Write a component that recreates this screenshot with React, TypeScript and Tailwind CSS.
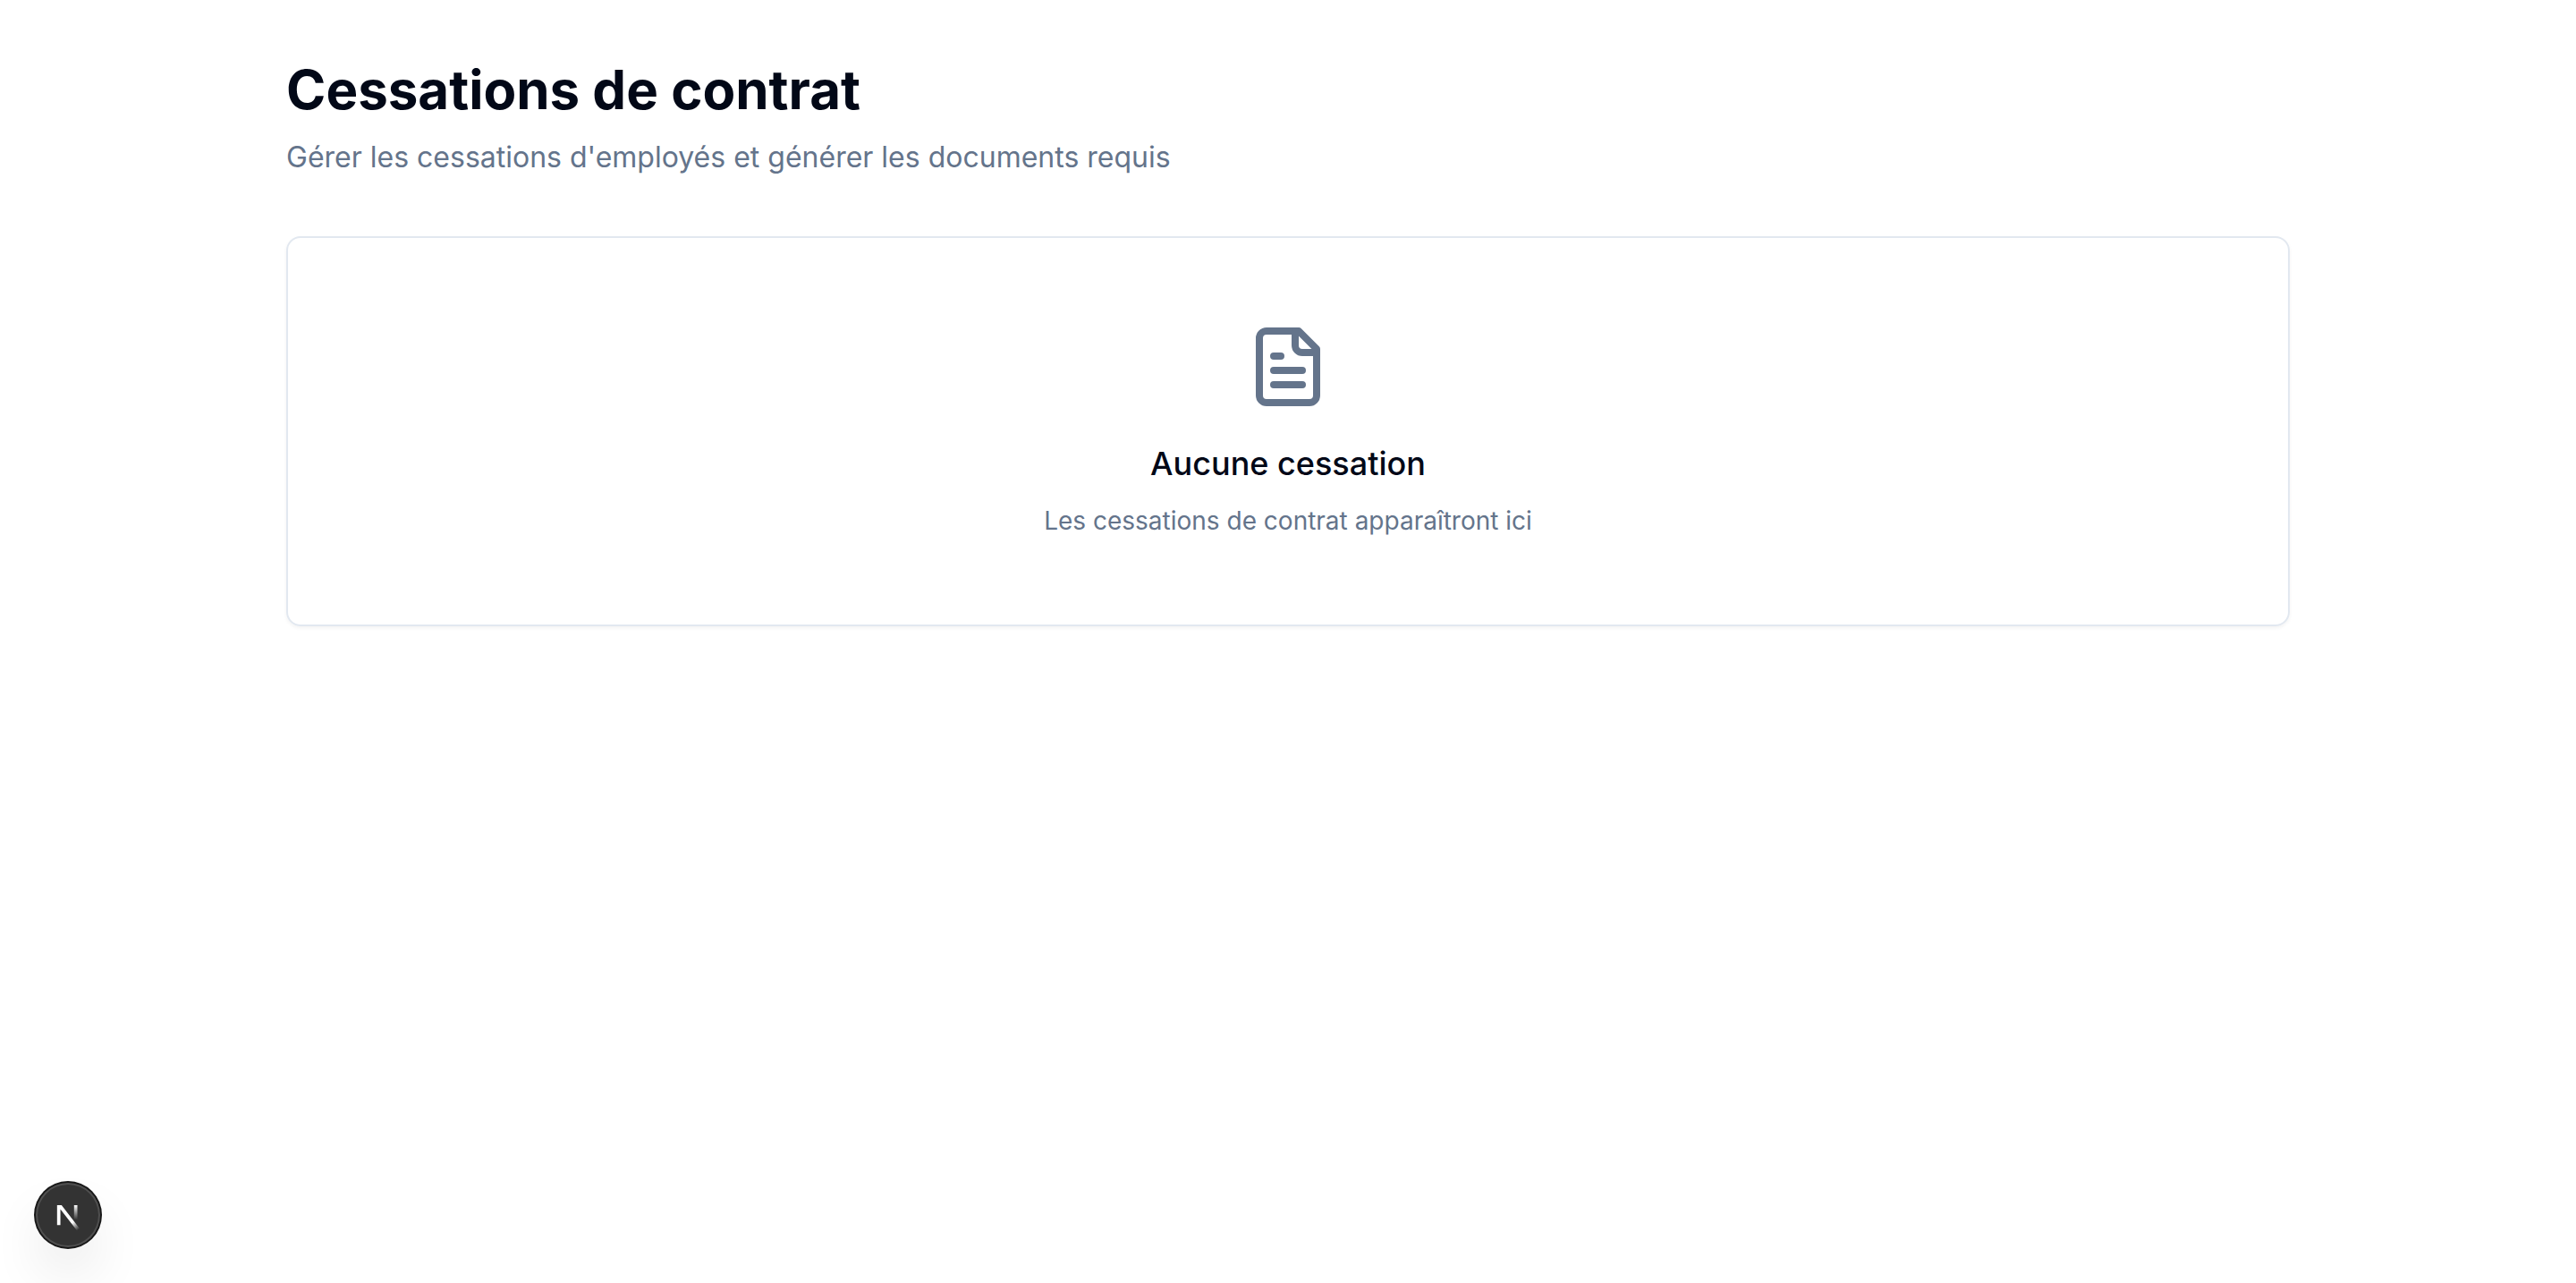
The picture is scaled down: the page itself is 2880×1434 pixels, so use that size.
export default function App() {
  return (
    <div className="min-h-screen bg-white font-['Inter',sans-serif] text-[#020817]">
      <main className="mx-auto max-w-[2240px] py-16">
        <header className="mb-16">
          <h1 className="text-[60px] leading-[72px] font-bold">Cessations de contrat</h1>
          <p className="mt-4 text-[32px] leading-[48px] text-[#64748b]">Gérer les cessations d'employés et générer les documents requis</p>
        </header>
        <section className="flex flex-col items-center rounded-2xl border-2 border-[#e2e8f0] py-24 text-center shadow-[0_2px_4px_rgba(0,0,0,0.05)]">
          <svg viewBox="0 0 24 24" className="mb-8 size-24 text-[#64748b]" fill="none" stroke="currentColor" strokeWidth="2" strokeLinecap="round" strokeLinejoin="round" aria-hidden="true">
            <path d="M15 2H6a2 2 0 0 0-2 2v16a2 2 0 0 0 2 2h12a2 2 0 0 0 2-2V7Z" />
            <path d="M14 2v4a2 2 0 0 0 2 2h4" />
            <path d="M10 9H8M16 13H8M16 17H8" />
          </svg>
          <h2 className="mb-4 text-[36px] leading-[56px] font-medium">Aucune cessation</h2>
          <p className="text-[28px] leading-[40px] text-[#64748b]">Les cessations de contrat apparaîtront ici</p>
        </section>
      </main>
      <button
        type="button"
        aria-label="Open Next.js Dev Tools"
        className="fixed bottom-10 left-10 size-18 rounded-full bg-[#333333] shadow-[0_0_0_2px_#171717,inset_0_0_0_2px_rgba(255,255,255,0.14),0_32px_64px_-16px_rgba(0,0,0,0.24)]"
      >
        <svg viewBox="0 0 36 36" className="size-18" fill="none" aria-hidden="true">
          <defs>
            <linearGradient id="diagonal" x1="9.956" y1="11.123" x2="15.478" y2="17.967" gradientUnits="userSpaceOnUse">
              <stop stopColor="white" />
              <stop offset="0.604" stopColor="white" stopOpacity="0" />
            </linearGradient>
            <linearGradient id="upright" x1="11.822" y1="1.4" x2="11.791" y2="9.625" gradientUnits="userSpaceOnUse">
              <stop stopColor="white" />
              <stop offset="1" stopColor="white" stopOpacity="0" />
            </linearGradient>
            <mask id="notch" maskUnits="userSpaceOnUse" x="0" y="0" width="20" height="20">
              <rect width="20" height="20" fill="white" />
              <rect width="5" height="1.5" fill="black" />
            </mask>
          </defs>
          <g transform="translate(10.5 11)" strokeWidth="1.86">
            <path d="M13.3 15.2 2.34 1V12.6" stroke="url(#diagonal)" mask="url(#notch)" />
            <path d="M11.825 1.5V13.1" stroke="url(#upright)" />
          </g>
        </svg>
      </button>
    </div>
  );
}
